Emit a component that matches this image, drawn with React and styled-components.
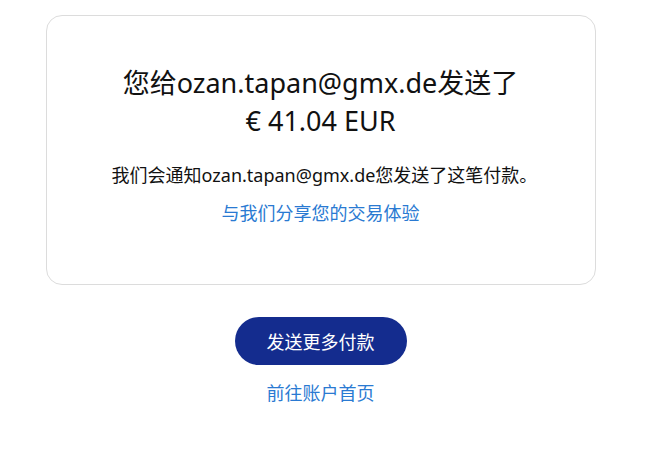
import React from 'react';
import styled, { createGlobalStyle } from 'styled-components';

const GlobalStyle = createGlobalStyle`
  body {
    margin: 0;
    background: #fff;
    font-family: "Noto Sans", "Noto Sans CJK SC", sans-serif;
    color: #1a1a1a;
  }
`;

const Page = styled.div`
  display: flex;
  flex-direction: column;
  align-items: center;
  padding: 15px 4px 0 0;
`;

const Card = styled.section`
  box-sizing: border-box;
  width: 550px;
  height: 270px;
  border: 1px solid #dcdcdc;
  border-radius: 16px;
  display: flex;
  flex-direction: column;
  align-items: center;
  padding-top: 48px;
`;

const Title = styled.h1`
  margin: 0;
  font-size: 27px;
  font-weight: 400;
  line-height: 38px;
  text-align: center;
  color: #111;
`;

const Line = styled.span`
  display: block;
  height: 38px;
`;

const Note = styled.p`
  margin: 23px 0 0;
  padding-left: 8px;
  font-size: 18px;
  line-height: 24px;
  color: #111;
`;

const Link = styled.a`
  display: block;
  font-size: 18px;
  line-height: 24px;
  color: #2a7ad2;
  text-decoration: none;
  margin-top: ${p => p.$gap || 0}px;
`;

const Button = styled.button`
  margin-top: 32px;
  width: 172px;
  height: 48px;
  border: none;
  border-radius: 24px;
  background: #142c8e;
  color: #fff;
  font-family: inherit;
  font-size: 18px;
`;

export default function App() {
  return (
    <>
      <GlobalStyle />
      <Page>
        <Card>
          <Title>
            <Line>您给ozan.tapan@gmx.de发送了</Line>
            <Line>€ 41.04 EUR</Line>
          </Title>
          <Note>我们会通知ozan.tapan@gmx.de您发送了这笔付款。</Note>
          <Link href="#" $gap={14}>与我们分享您的交易体验</Link>
        </Card>
        <Button>发送更多付款</Button>
        <Link href="#" $gap={16}>前往账户首页</Link>
      </Page>
    </>
  );
}
